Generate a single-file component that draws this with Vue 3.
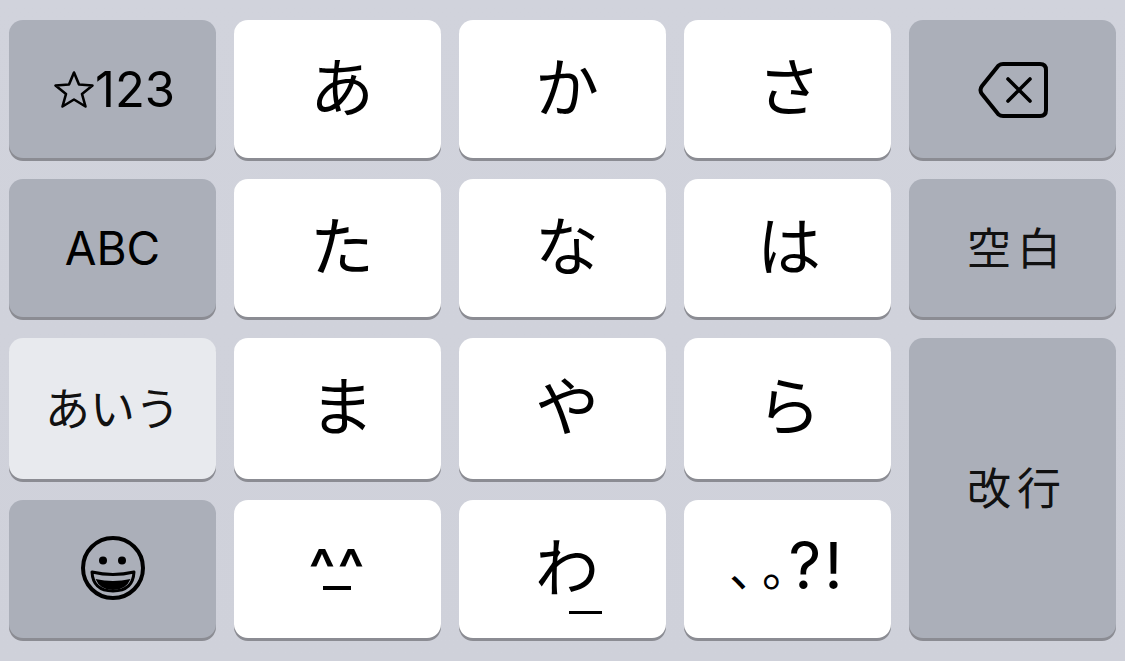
<template>
  <div class="keyboard">
    <button class="key gray sym">
      <svg class="star" viewBox="0 0 42 40" width="42" height="40">
        <path d="M21 3.500 L26 15.500 L39.500 16.500 L29 25 L32.500 37.500 L21 30.500 L9.500 37.500 L13 25 L2.500 16.500 L16 15.500 Z" fill="none" stroke="#000" stroke-width="2.6" stroke-linejoin="round" />
      </svg>
      <span>123</span>
    </button>
    <button v-for="(k, i) in row1" :key="k" class="key kana" :class="{ last: i === 2 }">{{ k }}</button>
    <button class="key gray back">
      <svg viewBox="0 0 72 60" width="72" height="60">
        <path d="M26 4 H63 Q69 4 69 10 V50 Q69 56 63 56 H26 Q23.500 56 21.500 54.500 L5 34 Q2 30 5 26 L21.500 5.500 Q23.500 4 26 4 Z" fill="none" stroke="#000" stroke-width="4" stroke-linejoin="round" />
        <path d="M31 19 L53 41 M53 19 L31 41" fill="none" stroke="#000" stroke-width="3.600" stroke-linecap="round" />
      </svg>
    </button>

    <button class="key gray label-en">ABC</button>
    <button v-for="(k, i) in row2" :key="k" class="key kana" :class="{ last: i === 2 }">{{ k }}</button>
    <button class="key gray label-ja">空白</button>

    <button class="key light label-ja small">あいう</button>
    <button v-for="(k, i) in row3" :key="k" class="key kana" :class="{ last: i === 2 }">{{ k }}</button>
    <button class="key gray label-ja tall">改行</button>

    <button class="key gray smile">
      <svg viewBox="0 0 66 66" width="66" height="66">
        <circle cx="33" cy="33" r="30" fill="none" stroke="#000" stroke-width="4" />
        <circle cx="23" cy="25.500" r="4" fill="#000" />
        <circle cx="42" cy="25.500" r="4" fill="#000" />
        <path d="M12 37 Q33 42 54 37 Q53 56 33 56 Q13 56 12 37 Z" fill="none" stroke="#000" stroke-width="3" stroke-linejoin="round" />
        <path d="M15.500 44 Q33 48 50.500 44 Q46 55 33 55 Q20 55 15.500 44 Z" fill="#000" />
      </svg>
    </button>
    <button class="key plain">
      <span class="face">^^<i class="mouth"></i></span>
    </button>
    <button class="key kana">
      <span class="wa">わ<i class="dash"></i></span>
    </button>
    <button class="key punct"><span class="comma">、</span><span class="period">。</span>?!</button>
  </div>
</template>

<script setup>
const row1 = ['あ', 'か', 'さ']
const row2 = ['た', 'な', 'は']
const row3 = ['ま', 'や', 'ら']
</script>

<style>
html, body { margin: 0; background: #d0d2db; }
</style>

<style scoped>
.keyboard {
  box-sizing: border-box;
  width: 1125px;
  height: 661px;
  padding: 20px 9px 0;
  display: grid;
  grid-template-columns: repeat(5, 207px);
  grid-template-rows: 138px 138px 141px 138px;
  column-gap: 18px;
  row-gap: 21px;
  background: linear-gradient(#d1d3dc, #cfd1da);
  font-family: "Noto Sans CJK JP", sans-serif;
  color: #000;
}
.key {
  display: flex;
  align-items: center;
  justify-content: center;
  border: 0;
  padding: 0;
  border-radius: 14px;
  background: #fff;
  box-shadow: 0 3px 0 #8b8c93;
  font-family: inherit;
  color: #000;
}
.gray { background: #abafb9; }
.light { background: #e8eaee; }
.back { padding-top: 2px; }
.smile { padding-bottom: 2px; }
.kana { font-size: 64px; line-height: 1; padding: 0 0 13px 9px; }
.kana.last { padding-left: 3px; }
.sym { font-family: Inter, sans-serif; font-size: 49px; padding-left: 3px; }
.label-en { font-family: Inter, sans-serif; font-size: 46px; }
.label-ja { font-size: 44px; letter-spacing: 6px; padding: 0 0 4px 9px; color: #111; }
.small { font-size: 45px; letter-spacing: 0; padding: 0 0 4px 0; }
.tall { grid-column: 5; grid-row: 3 / span 2; }
.face {
  position: relative;
  display: inline-block;
  font-family: Inter, sans-serif;
  font-size: 56px;
  font-weight: 600;
  line-height: 1;
  letter-spacing: 2px;
  transform: translateX(0);
}
.mouth {
  position: absolute;
  left: 14px;
  width: 28px;
  bottom: 7px;
  height: 4px;
  background: #000;
}
.wa { position: relative; display: inline-block; }
.dash {
  position: absolute;
  left: 34px;
  bottom: -19px;
  width: 33px;
  height: 3px;
  background: #000;
}
.punct { font-family: Inter, sans-serif; font-size: 64px; letter-spacing: 3px; padding-bottom: 8px; }
.comma, .period {
  font-family: "Noto Sans CJK JP", sans-serif;
  font-size: 48px;
  font-weight: 400;
  letter-spacing: 0;
  font-feature-settings: "palt";
}
.comma { margin-right: 8px; }
.period { margin-right: 3px; }
</style>
